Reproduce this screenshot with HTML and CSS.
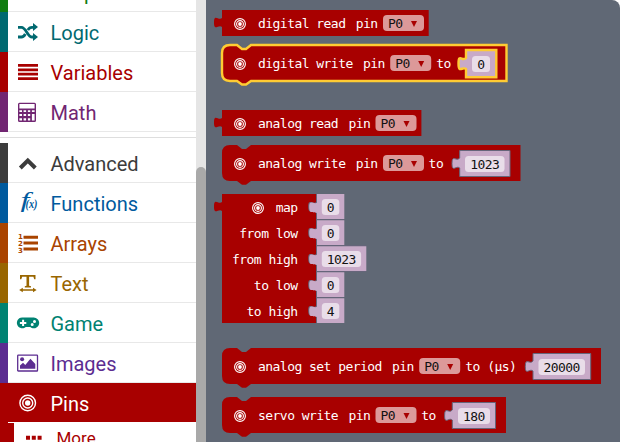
FILE: index.html
```html
<!DOCTYPE html>
<html lang="en">
<head>
<meta charset="utf-8">
<title>Toolbox</title>
<link rel="stylesheet" href="styles.css">
</head>
<body>
<main class="editor">
  <nav class="toolbox">
    <div class="row loops"><svg viewBox="0 0 20 20"></svg><span>Loops</span></div>
    <div class="row logic"><svg viewBox="0 0 20 20"><path class="line" stroke-width="2.8" d="M0 5.3H3.5C8 5.3 9.5 15 14 15H16M0 15H3.5C5.5 15 6.5 13.5 7.3 12M9.8 8C10.8 6.3 12 5.3 14 5.3H16"/><path d="M15 1 20 5 15 9ZM15 11 20 15 15 19Z"/></svg><span>Logic</span></div>
    <div class="row variables"><svg viewBox="0 0 20 20"><path d="M0 2H20V4.8H0ZM0 6.4H20V9.2H0ZM0 10.8H20V13.6H0ZM0 15.2H20V18H0Z"/></svg><span>Variables</span></div>
    <div class="row math"><svg viewBox="0 0 20 20"><path fill-rule="evenodd" d="M1.5 0.7H16.5Q18 .7 18 2.2V18.5Q18 20 16.5 20H1.5Q0 20 0 18.5V2.2Q0 .7 1.5 .7ZM1.4 2V6.4H16.6V2ZM1.4 8.2V9.9H4V8.2ZM5.6 8.2V9.9H8.1V8.2ZM9.9 8.2V9.9H12.2V8.2ZM13.9 8.2V9.9H16.6V8.2ZM1.4 12V14H4V12ZM5.6 12V14H8.1V12ZM9.9 12V14H12.2V12ZM1.4 16.2V18.5H4V16.2ZM5.6 16.2V18.5H8.1V16.2ZM9.9 16.2V18.5H12.2V16.2ZM13.9 12V18.5H16.6V12Z"/></svg><span>Math</span></div>
    <div class="divider"></div>
    <div class="row advanced"><svg viewBox="0 0 20 20"><path class="line" stroke-width="4" d="M2.3 15 9.8 7.6 17.3 15"/></svg><span>Advanced</span></div>
    <div class="row functions"><svg viewBox="0 0 20 20"><text class="fn" x="2.5" y="14" textLength="9" lengthAdjust="spacingAndGlyphs">f</text><text class="fn-arg" x="7.5" y="15" textLength="12" lengthAdjust="spacingAndGlyphs">(x)</text></svg><span>Functions</span></div>
    <div class="row arrays"><svg viewBox="0 0 20 20"><path d="M5.5 2.8H20V5.8H5.5ZM5.5 8.6H20V11.6H5.5ZM5.5 14.4H20V17.4H5.5Z"/><text class="digit" x="0" y="5.5">1</text><text class="digit" x="0" y="12.7">2</text><text class="digit" x="0" y="19.7">3</text></svg><span>Arrays</span></div>
    <div class="row text"><svg viewBox="0 0 20 20"><path d="M2 2H17.5V6.3H16.2L15.4 3.8H11.1V12.8L13 13.3V14.5H6.8V13.3L8.5 12.8V3.8H4.2L3.3 6.3H2ZM1.2 17 4.8 14.8V16.3H15V14.8L18.6 17 15 19.2V17.8H4.8V19.2Z"/></svg><span>Text</span></div>
    <div class="row game"><svg viewBox="0 0 20 20"><path fill-rule="evenodd" d="M5.2 4.6H15.2A5.4 5.4 0 1 1 12.2 14H7.8A5.4 5.4 0 1 1 5.2 4.6ZM4.1 6.8V9H1.9V10.9H4.1V13.1H6.1V10.9H8.3V9H6.1V6.8ZM14.2 9.9A1.5 1.5 0 1 0 14.2 12.9 1.5 1.5 0 1 0 14.2 9.9ZM16.5 6.9A1.5 1.5 0 1 0 16.5 9.9 1.5 1.5 0 1 0 16.5 6.9Z"/></svg><span>Game</span></div>
    <div class="row images"><svg viewBox="0 0 20 20"><rect class="line" x="-.3" y="2.2" width="19.8" height="15.8" rx=".6" stroke-width="1.3"/><circle cx="4.1" cy="6.2" r="2"/><path d="M2 15.8V12.5L5 9.8 7.3 12 12.4 5.8 17.3 11V15.8Z"/></svg><span>Images</span></div>
    <div class="row pins"><svg viewBox="0 0 20 20"><g class="line" stroke-width="1.4"><circle cx="9.7" cy="10" r="7.8"/><circle cx="9.7" cy="10" r="5"/></g><circle cx="9.7" cy="10" r="2.7"/></svg><span>Pins</span></div>
    <div class="row more"><svg viewBox="0 0 20 20"><path d="M2 7.7H6V11.7H2ZM7.8 7.7H11.8V11.7H7.8ZM13.6 7.7H17.6V11.7H13.6Z"/></svg><span>More</span></div>
  </nav>
  <div class="scrollbar"><div class="thumb"></div></div>
  <section class="flyout">
    <svg class="blocks" width="414" height="442" viewBox="206 0 414 442">
      <defs>
        <g id="target"><circle r="5.4"/><circle r="3.4"/><circle class="dot" r="1.9"/></g>
        <path id="tab" d="M.5-4.7C-3-1.5-7.8-8.5-7.8 0S-3 3.5 .5 6.5Z"/>
        <g id="menu"><rect class="menu-bg" width="41" height="16" rx="4"/><text class="dark" x="5" y="13">P0</text><path class="arrow" d="M28 6H34L31 12Z"/></g>
      </defs>

      <g class="block">
        <path d="M222 10H428.7V36H222V27C218.5 24 214 32 214 22.5S218.5 21 222 18Z"/>
        <use href="#target" x="240" y="24"/>
        <text x="258" y="28">digital read</text><text x="355.7" y="28">pin</text>
        <use href="#menu" x="383" y="15"/>
      </g>

      <g class="block">
        <path class="selected" d="M230 45H237L242 49H246L251 45H506.5V81H251L246 84.5H242L237 81H230Q222 81 222 73V53Q222 45 230 45Z"/>
        <use href="#target" x="240" y="64"/>
        <text x="258" y="68">digital write</text><text x="363" y="68">pin</text>
        <use href="#menu" x="390.2" y="55"/><text x="436.3" y="68">to</text>
        <path class="value selected" d="M466 50H496.3V77.3H466V69C462.5 66 458.5 74 458.5 63.5S462.5 62 466 58Z"/>
        <rect class="field" x="472" y="56" width="18" height="16" rx="3.5"/><text class="dark" x="477.3" y="69">0</text>
      </g>

      <g class="block">
        <path d="M222 110H421.4V136H222V127C218.5 124 214 132 214 122.5S218.5 121 222 118Z"/>
        <use href="#target" x="240" y="124"/>
        <text x="258" y="128">analog read</text><text x="348.5" y="128">pin</text>
        <use href="#menu" x="375.5" y="115"/>
      </g>

      <g class="block">
        <path d="M230 145H237L242 149H246L251 145H520.5V181H251L246 184.7H242L237 181H230Q222 181 222 173V153Q222 145 230 145Z"/>
        <use href="#target" x="240" y="164"/>
        <text x="258" y="168">analog write</text><text x="355.7" y="168">pin</text>
        <use href="#menu" x="383" y="155"/><text x="428.6" y="168">to</text>
        <path class="value outlined" d="M459.7 150.5H510V176.5H459.7V168C456.2 165 452 173 452 163.5S456.2 162 459.7 158Z"/>
        <rect class="field" x="465" y="156" width="39.5" height="16" rx="3.5"/><text class="dark" x="470.2" y="169">1023</text>
      </g>

      <g class="block">
        <path d="M222 194H316.5V323H222V211C218.5 208 214 216 214 206.5S218.5 205 222 202Z"/>
        <use href="#target" x="258" y="208"/>
        <g class="labels"><text x="297.6" y="212">map</text><text x="297.6" y="238">from low</text><text x="297.6" y="264">from high</text><text x="297.6" y="290">to low</text><text x="297.6" y="316">to high</text></g>
        <g class="value">
          <path d="M316.7 194H344.3V219H316.7ZM316.7 220.2H344.3V245H316.7ZM316.7 246.2H366.3V271H316.7ZM316.7 272.2H344.3V297H316.7ZM316.7 298.2H344.3V323H316.7Z"/>
        </g>
        <g class="tab-shadow"><use href="#tab" x="316" y="206.5"/><use href="#tab" x="316" y="232.5"/><use href="#tab" x="316" y="258.5"/><use href="#tab" x="316" y="284.5"/><use href="#tab" x="316" y="310.5"/></g>
        <path class="seam" d="M316.5 194V323M316.5 219.5H344M316.5 245.5H366M316.5 271.5H366M316.5 297.5H344"/>
        <g class="value"><use href="#tab" x="317" y="207"/><use href="#tab" x="317" y="233"/><use href="#tab" x="317" y="259"/><use href="#tab" x="317" y="285"/><use href="#tab" x="317" y="311"/></g>
        <g class="field"><rect x="321.8" y="199" width="17.5" height="16" rx="3.5"/><rect x="321.8" y="225" width="17.5" height="16" rx="3.5"/><rect x="321.8" y="251" width="39.3" height="16" rx="3.5"/><rect x="321.8" y="277" width="17.5" height="16" rx="3.5"/><rect x="321.8" y="303" width="17.5" height="16" rx="3.5"/></g>
        <g><text class="dark" x="326.7" y="212">0</text><text class="dark" x="326.7" y="238">0</text><text class="dark" x="326.7" y="264">1023</text><text class="dark" x="326.7" y="290">0</text><text class="dark" x="326.7" y="316">4</text></g>
      </g>

      <g class="block">
        <path d="M230 348H237L242 352H246L251 348H601V384H251L246 387.7H242L237 384H230Q222 384 222 376V356Q222 348 230 348Z"/>
        <use href="#target" x="240" y="367"/>
        <text x="258" y="371">analog set period</text><text x="392" y="371">pin</text>
        <use href="#menu" x="419.2" y="358"/><text x="465.3" y="371">to (µs)</text>
        <path class="value outlined" d="M533 353.5H590.7V379.5H533V371C529.5 368 525.3 376 525.3 366.5S529.5 365 533 361Z"/>
        <rect class="field" x="538.5" y="359" width="46.5" height="16" rx="3.5"/><text class="dark" x="543.4" y="372">20000</text>
      </g>

      <g class="block">
        <path d="M230 397H237L242 401H246L251 397H506V433H251L246 436.7H242L237 433H230Q222 433 222 425V405Q222 397 230 397Z"/>
        <use href="#target" x="240" y="416"/>
        <text x="258" y="420">servo write</text><text x="348.5" y="420">pin</text>
        <use href="#menu" x="375.5" y="407"/><text x="421.3" y="420">to</text>
        <path class="value outlined" d="M452.3 402.5H495.5V428.5H452.3V420C448.8 417 444.6 425 444.6 415.5S448.8 414 452.3 410Z"/>
        <rect class="field" x="458" y="408" width="32" height="16" rx="3.5"/><text class="dark" x="463" y="421">180</text>
      </g>
    </svg>
  </section>
</main>
</body>
</html>
```
FILE: styles.css
```css
body { margin: 0; background: #fff; overflow: hidden; }
.editor { display: flex; width: 621px; height: 442px; overflow: hidden; }
.toolbox { width: 196px; flex: none; margin-top: -28px; font: 20px/40px Roboto, sans-serif; }
.row { --color: #000; display: flex; align-items: center; box-sizing: border-box; height: 40px; padding-left: 10px; border-left: 8px solid var(--color); color: var(--color); background: linear-gradient(#e8e8e8, #e8e8e8) bottom / 100% 1px no-repeat; }
.row span { margin-left: 12.5px; padding-top: 2px; }
.row svg { width: 20px; height: 20px; flex: none; fill: currentColor; overflow: visible; }
.line { fill: none; stroke: currentColor; }
.divider { box-sizing: border-box; height: 11px; border-top: 5px solid #fff; background: linear-gradient(#dedede, #dedede) top / 100% 1px no-repeat; }
.loops { --color: #107c10; }
.logic { --color: #006970; }
.variables { --color: #a80000; }
.math { --color: #712672; }
.advanced { --color: #3c3c3c; }
.functions { --color: #005a9e; }
.arrays { --color: #a94400; }
.text { --color: #996600; }
.game { --color: #008272; }
.images { --color: #5c2d91; }
.pins { --color: #a80000; color: #fff; background: linear-gradient(#fff, #fff) bottom / 100% 1px no-repeat #a80000; }
.more { --color: #a80000; border-left-width: 14px; font-size: 17px; height: 30px; }
.row.more span { margin-left: 12.5px; padding-top: 0; }
.fn { font: italic 21px "Liberation Serif", serif; }
.fn-arg { font: italic bold 12px "Liberation Serif", serif; }
.digit { font: bold 7px "DejaVu Sans", sans-serif; }
.scrollbar { width: 10px; flex: none; box-sizing: border-box; padding-top: 167px; background: #e5e5e5; }
.thumb { height: 285px; border-radius: 5px; background: #a9a9a9; }
.flyout { width: 414px; background: #606875; border-top-right-radius: 8px; overflow: hidden; }
.blocks { display: block; font: 13px "DejaVu Sans Mono", monospace; letter-spacing: -.54px; }
.block { fill: #a80000; }
.block text { fill: #fff; white-space: pre; }
.block .dark, #menu .dark { fill: #111; }
.labels { text-anchor: end; }
#target { fill: none; stroke: #fff; stroke-width: 1.1; }
#target .dot { fill: #fff; stroke: none; }
.menu-bg { fill: #dc9999; }
.arrow { fill: #a80000; }
.block .value { fill: #c8aac8; }
.field { fill: #e9dde9; }
.block .field { fill: #e9dde9; }
.selected { stroke: #fc3; stroke-width: 2.4; }
.outlined { stroke: #66657a; stroke-width: 1; }
.tab-shadow { fill: #66657a; }
.seam { fill: none; stroke: #66657a; stroke-width: 1; }
```
